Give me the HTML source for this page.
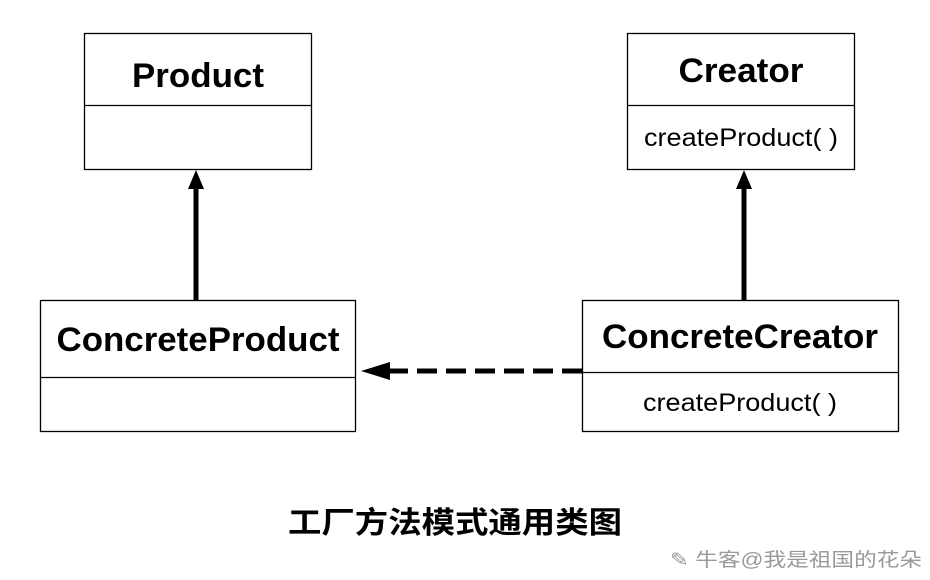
<!DOCTYPE html>
<html><head><meta charset="utf-8"><style>html,body{margin:0;padding:0;background:#fff}svg{display:block}</style></head>
<body>
<svg width="930" height="580" xmlns="http://www.w3.org/2000/svg" font-family="'Liberation Sans','Noto Sans CJK SC',sans-serif">
<rect width="930" height="580" fill="#fff"/>
<g fill="none" stroke="#000" stroke-width="1.3">
<rect x="84.5" y="33.5" width="227" height="136"/><line x1="84" y1="105.5" x2="311" y2="105.5"/>
<rect x="627.5" y="33.5" width="227" height="136"/><line x1="627" y1="105.5" x2="854" y2="105.5"/>
<rect x="40.5" y="300.5" width="315" height="131"/><line x1="40" y1="377.5" x2="355" y2="377.5"/>
<rect x="582.5" y="300.5" width="316" height="131"/><line x1="582" y1="372.5" x2="898" y2="372.5"/>
</g>
<line x1="196" y1="300" x2="196" y2="185" stroke="#000" stroke-width="5"/>
<polygon points="196,170 188,189 204,189" fill="#000"/>
<line x1="744" y1="300" x2="744" y2="185" stroke="#000" stroke-width="5"/>
<polygon points="744,170 736,189 752,189" fill="#000"/>
<line x1="582" y1="371" x2="388" y2="371" stroke="#000" stroke-width="5" stroke-dasharray="20,9"/>
<polygon points="361,371 390,362 390,380" fill="#000"/>
<g font-weight="bold" font-size="34" text-anchor="middle" fill="#000">
<text x="198" y="87" textLength="132" lengthAdjust="spacingAndGlyphs">Product</text>
<text x="741" y="82" textLength="125" lengthAdjust="spacingAndGlyphs">Creator</text>
<text x="198" y="351" textLength="283" lengthAdjust="spacingAndGlyphs">ConcreteProduct</text>
<text x="740" y="348" textLength="276" lengthAdjust="spacingAndGlyphs">ConcreteCreator</text>
</g>
<g font-size="25" text-anchor="middle" fill="#000">
<text x="741" y="146" textLength="194" lengthAdjust="spacingAndGlyphs">createProduct( )</text>
<text x="740" y="411" textLength="194" lengthAdjust="spacingAndGlyphs">createProduct( )</text>
</g>
<text x="455" y="533" font-size="30" font-weight="bold" text-anchor="middle" textLength="334" lengthAdjust="spacingAndGlyphs">工厂方法模式通用类图</text>
<text x="670" y="566" font-size="19" fill="#999" textLength="252" lengthAdjust="spacingAndGlyphs">✎ 牛客@我是祖国的花朵</text>
</svg>
</body></html>
